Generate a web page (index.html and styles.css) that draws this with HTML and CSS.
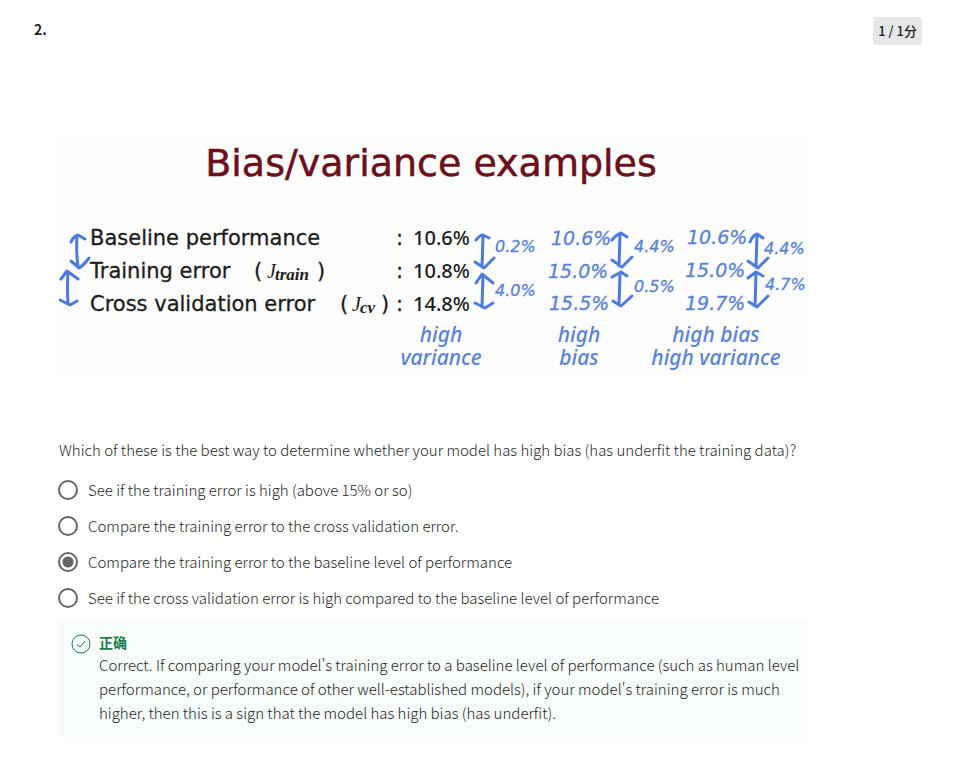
FILE: index.html
```html
<!DOCTYPE html>
<html lang="zh-CN">
<head>
<meta charset="utf-8">
<title>Quiz question 2</title>
<link rel="stylesheet" href="styles.css">
</head>
<body>
<main class="question">
  <header class="question-head">
    <h2 class="number">2.</h2>
    <span class="points">1 / 1分</span>
  </header>
  <div class="question-body">
    <svg class="slide" viewBox="0 0 749 240" role="img" aria-label="Bias/variance examples">
      <rect width="749" height="240" fill="#fdfdfd"/>
      <text class="slide-title" x="372" y="40">Bias/variance examples</text>
      <g class="typed">
        <text x="31" y="109">Baseline performance</text>
        <text x="31" y="142">Training error</text>
        <text x="31" y="175">Cross validation error</text>
        <text x="195" y="142">(</text>
        <text x="258" y="142">)</text>
        <text x="281" y="175">(</text>
        <text x="322" y="175">)</text>
        <text x="337" y="109">:</text>
        <text x="337" y="142">:</text>
        <text x="337" y="175">:</text>
      </g>
      <g class="math">
        <text x="208" y="142">J</text>
        <text class="sub" x="216" y="144">train</text>
        <text x="293" y="175">J</text>
        <text class="sub" x="301" y="177">cv</text>
      </g>
      <g class="value">
        <text x="354" y="109">10.6%</text>
        <text x="354" y="142">10.8%</text>
        <text x="354" y="175">14.8%</text>
      </g>
      <g class="ink">
        <text x="492" y="109">10.6%</text>
        <text x="489" y="142">15.0%</text>
        <text x="490" y="174">15.5%</text>
        <text x="628" y="108">10.6%</text>
        <text x="626" y="141">15.0%</text>
        <text x="626" y="174">19.7%</text>
      </g>
      <g class="ink gap">
        <text x="436" y="116">0.2%</text>
        <text x="436" y="160">4.0%</text>
        <text x="575" y="116">4.4%</text>
        <text x="575" y="156">0.5%</text>
        <text x="705" y="118">4.4%</text>
        <text x="706" y="154">4.7%</text>
      </g>
      <g class="note">
        <text><tspan x="382" y="206">high</tspan><tspan x="382" y="229">variance</tspan></text>
        <text><tspan x="520" y="206">high</tspan><tspan x="520" y="229">bias</tspan></text>
        <text><tspan x="657" y="206">high bias</tspan><tspan x="657" y="229">high variance</tspan></text>
      </g>
      <g class="arrows">
        <path d="M18 100Q17 116 19 131M12 106Q14 101 19 99L26 103M12 125L20 132Q24 130 30 122"/>
        <path d="M9 136Q8 152 9 168M2 143L8 135L19 143M1 164L11 169L18 165"/>
        <path d="M424 100L423 131M417 104Q421 99 424 99L430 102M416 126L425 132L435 122"/>
        <path d="M424 139L423 171M417 147L423 138L434 147M416 167L426 172L434 167"/>
        <path d="M561 98L560 130M553 104Q558 98 562 97L568 101M553 124L563 131L573 121"/>
        <path d="M561 137L560 169M553 141L562 136L568 140M554 165L562 170L573 160"/>
        <path d="M698 99L697 131M691 106Q694 99 698 98L704 102M689 125L699 132L709 122"/>
        <path d="M697 137L696 170M689 142L697 136L704 140M690 166L698 171L709 160"/>
      </g>
    </svg>
    <fieldset class="answers">
      <legend>Which of these is the best way to determine whether your model has high bias (has underfit the training data)?</legend>
      <label class="option"><input type="radio" name="answer">See if the training error is high (above 15% or so)</label>
      <label class="option"><input type="radio" name="answer">Compare the training error to the cross validation error.</label>
      <label class="option"><input type="radio" name="answer" checked>Compare the training error to the baseline level of performance</label>
      <label class="option"><input type="radio" name="answer">See if the cross validation error is high compared to the baseline level of performance</label>
    </fieldset>
    <section class="feedback">
      <svg class="check" viewBox="0 0 20 20" aria-hidden="true"><circle cx="10" cy="10" r="9"/><path d="M6 10.500L9 13L14 7"/></svg>
      <div>
        <h3>正确</h3>
        <p>Correct. If comparing your model's training error to a baseline level of performance (such as human level performance, or performance of other well-established models), if your model's training error is much higher, then this is a sign that the model has high bias (has underfit).</p>
      </div>
    </section>
  </div>
</main>
</body>
</html>
```
FILE: styles.css
```css
* { box-sizing: border-box; }
body {
  margin: 0;
  background: #fff;
  color: #1f1f1f;
  font-family: "Noto Sans CJK SC", sans-serif;
  font-size: 15px;
  font-weight: 300;
  line-height: 24px;
}
h2, h3, p { margin: 0; }
.question { padding: 17px 53px 32px 34px; }
.question-head {
  display: flex;
  justify-content: space-between;
  align-items: flex-start;
}
.number {
  font-size: 14px;
  font-weight: 700;
}
.points {
  padding: 2px 5px;
  border-radius: 4px;
  background: #e5e7e8;
  font-size: 13px;
  font-weight: 500;
}
.question-body {
  max-width: 799px;
  margin-top: 91px;
  padding: 0 25px;
}
.slide {
  display: block;
  width: 100%;
  height: auto;
}
.slide-title {
  fill: #6b101c;
  stroke: #6b101c;
  stroke-width: 0.5px;
  font: 38px "DejaVu Sans", sans-serif;
  text-anchor: middle;
}
.typed {
  fill: #1c1c1c;
  stroke: #1c1c1c;
  stroke-width: 0.3px;
  font: 21px "DejaVu Sans", sans-serif;
}
.math {
  fill: #1c1c1c;
  font: italic 20px "Liberation Serif", serif;
}
.math .sub { font-size: 17px; font-weight: 700; }
.value {
  fill: #1c1c1c;
  font: 500 20px "Noto Sans", sans-serif;
}
.ink {
  fill: #5a82d6;
  stroke: #5a82d6;
  stroke-width: 0.3px;
  font: italic 19px "DejaVu Sans", sans-serif;
}
.gap { font-size: 16px; }
.note {
  fill: #5a82d6;
  font: italic 500 21px "Noto Sans", sans-serif;
  text-anchor: middle;
}
.arrows {
  fill: none;
  stroke: #4c7be0;
  stroke-width: 3;
  stroke-linecap: round;
  stroke-linejoin: round;
}
.answers {
  min-width: 0;
  margin: 62px 0 0;
  padding: 0;
  border: 0;
}
.answers legend {
  margin-bottom: 10px;
  padding: 0;
}
.option {
  display: flex;
  align-items: center;
  gap: 10px;
  height: 36px;
  margin-left: -1px;
}
.option input {
  flex: none;
  appearance: none;
  width: 20px;
  height: 20px;
  margin: 0;
  border: 2px solid #666;
  border-radius: 50%;
}
.option input:checked {
  background: radial-gradient(circle, #666 5px, transparent 6px);
}
.feedback {
  display: flex;
  gap: 8px;
  margin-top: 6px;
  padding: 9px 4px 12px 12px;
  background: #f7fbf9;
}
.check {
  flex: none;
  width: 20px;
  height: 20px;
  margin-top: 3px;
  fill: none;
  stroke: #1d7c50;
}
.feedback h3 {
  color: #1d7c50;
  font-size: 14px;
  font-weight: 700;
  line-height: 22px;
}
```
